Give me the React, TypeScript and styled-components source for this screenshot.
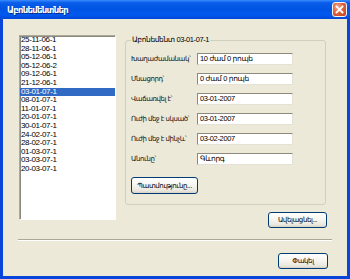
import React from 'react'
import styled, { createGlobalStyle } from 'styled-components'

const GlobalStyle = createGlobalStyle`
  html, body {
    margin: 0;
    padding: 0;
    background: #ECE9D8;
  }
  body {
    font-family: "Liberation Sans", "DejaVu Sans", sans-serif;
    color: #000;
  }
`

const Window = styled.div`
  width: 350px;
  height: 279px;
  display: flex;
  flex-direction: column;
  background: #0846DB;
  overflow: hidden;
`

const TitleBar = styled.div`
  height: 19px;
  flex: none;
  display: flex;
  align-items: center;
  justify-content: space-between;
  padding: 0 3px 0 7px;
  background: linear-gradient(180deg, #3A8CFF 0%, #0A5EEA 14%, #0054E3 45%, #0059EE 78%, #0046D8 100%);
`

const Title = styled.span`
  color: #fff;
  font: bold 8.5px "DejaVu Sans", sans-serif;
  letter-spacing: -0.7px;
  text-shadow: 1px 1px #0A2A8A;
`

const CloseBox = styled.div`
  width: 15px;
  height: 15px;
  box-sizing: border-box;
  border: 1px solid #F4F4F4;
  border-radius: 3px;
  background: radial-gradient(circle at 35% 30%, #F0A48A 0%, #E0643E 45%, #C23E1A 100%);
  display: flex;
  align-items: center;
  justify-content: center;
`

const Body = styled.div`
  flex: 1;
  margin: 0 3px 3px;
  background: #ECE9D8;
  display: flex;
  flex-direction: column;
  padding: 16px 20px 0 16px;
`

const TopRow = styled.div`
  display: flex;
  align-items: flex-start;
  gap: 9px;
`

const ListBox = styled.div`
  width: 97px;
  height: 185px;
  box-sizing: border-box;
  background: #fff;
  border: 1px solid;
  border-color: #ACA899 #FFFFFF #FFFFFF #ACA899;
  box-shadow: inset 1px 1px 0 #8C8A7E;
  overflow: hidden;
`

const ListItem = styled.div<{ $selected?: boolean }>`
  height: 8.6px;
  line-height: 8.6px;
  font-size: 8px;
  letter-spacing: -0.35px;
  padding-left: 1px;
  white-space: nowrap;
  background: ${p => (p.$selected ? '#316AC5' : 'transparent')};
  color: ${p => (p.$selected ? '#fff' : '#000')};
`

const RightColumn = styled.div`
  width: 202px;
  display: flex;
  flex-direction: column;
  align-items: flex-end;
`

const GroupBox = styled.fieldset`
  width: 201px;
  box-sizing: border-box;
  margin: 0;
  align-self: flex-start;
  border: 1px solid #D0D0BF;
  border-radius: 3px;
  padding: 8px 5px 10px 5px;
`

const Legend = styled.legend`
  font-size: 7.5px;
  line-height: 10px;
  padding: 0 1px;
  letter-spacing: -0.4px;
`

const FieldGrid = styled.div`
  display: grid;
  grid-template-columns: 66px 96px;
  row-gap: 8px;
  align-items: center;
`

const Label = styled.span`
  font-size: 7px;
  letter-spacing: -0.45px;
  white-space: nowrap;
  line-height: 12px;
  color: #111;
`

const Field = styled.div`
  height: 12px;
  box-sizing: border-box;
  background: #fff;
  border: 1px solid;
  border-color: #8C8A7E #E4E2D6 #E4E2D6 #8C8A7E;
  font-size: 7.5px;
  letter-spacing: -0.35px;
  line-height: 10px;
  padding: 0 2px;
  white-space: nowrap;
  overflow: hidden;
`

const Button = styled.button<{ $width: number }>`
  width: ${p => p.$width}px;
  height: 16px;
  box-sizing: border-box;
  padding: 0;
  border: 1px solid #003C74;
  border-radius: 3px;
  background: linear-gradient(180deg, #FFFFFF 0%, #F6F5F0 45%, #E9E7DD 85%, #D6D0C5 100%);
  font-family: "Liberation Sans", "DejaVu Sans", sans-serif;
  font-size: 7px;
  letter-spacing: -0.4px;
  color: #000;
  white-space: nowrap;
`

const HistoryButton = styled(Button)`
  margin-top: 12px;
  height: 17px;
`

const AddButton = styled(Button)`
  margin-top: 7px;
`

const Divider = styled.div`
  margin: 11px -5px 0 -1px;
  border-top: 1px solid #ACA899;
  border-bottom: 1px solid #FFFFFF;
`

const Footer = styled.div`
  display: flex;
  justify-content: flex-end;
  margin: 12px -1px 0 0;
`

const items = [
  '25-11-06-1', '28-11-06-1', '05-12-06-1', '05-12-06-2',
  '09-12-06-1', '21-12-06-1', '03-01-07-1', '08-01-07-1',
  '11-01-07-1', '20-01-07-1', '30-01-07-1', '24-02-07-1',
  '28-02-07-1', '01-03-07-1', '03-03-07-1', '20-03-07-1',
]

const fields = [
  { label: 'Խաղաժամանակ՝', value: '10 ժամ 0 րոպե' },
  { label: 'Մնացորդ՝', value: '0 ժամ 0 րոպե' },
  { label: 'Վաճառվել է՝', value: '03-01-2007' },
  { label: 'Ուժի մեջ է սկսած՝', value: '03-01-2007' },
  { label: 'Ուժի մեջ է մինչև՝', value: '03-02-2007' },
  { label: 'Անունը՝', value: 'Գևորգ' },
]

export default function App() {
  const selected = 6
  return (
    <>
      <GlobalStyle />
      <Window>
        <TitleBar>
          <Title>Աբոնեմենտներ</Title>
          <CloseBox>
            <svg width="9" height="9" viewBox="0 0 9 9">
              <path d="M1.5 1.5 L7.5 7.5 M7.5 1.5 L1.5 7.5" stroke="#fff" strokeWidth="1.8" strokeLinecap="square" />
            </svg>
          </CloseBox>
        </TitleBar>
        <Body>
          <TopRow>
            <ListBox>
              {items.map((it, i) => (
                <ListItem key={it} $selected={i === selected}>{it}</ListItem>
              ))}
            </ListBox>
            <RightColumn>
              <GroupBox>
                <Legend>Աբոնեմենտ {items[selected]}</Legend>
                <FieldGrid>
                  {fields.map(f => (
                    <React.Fragment key={f.label}>
                      <Label>{f.label}</Label>
                      <Field>{f.value}</Field>
                    </React.Fragment>
                  ))}
                </FieldGrid>
                <HistoryButton $width={67}>Պատմությունը...</HistoryButton>
              </GroupBox>
              <AddButton $width={59}>Ավելացնել...</AddButton>
            </RightColumn>
          </TopRow>
          <Divider />
          <Footer>
            <Button $width={50}>Փակել</Button>
          </Footer>
        </Body>
      </Window>
    </>
  )
}
